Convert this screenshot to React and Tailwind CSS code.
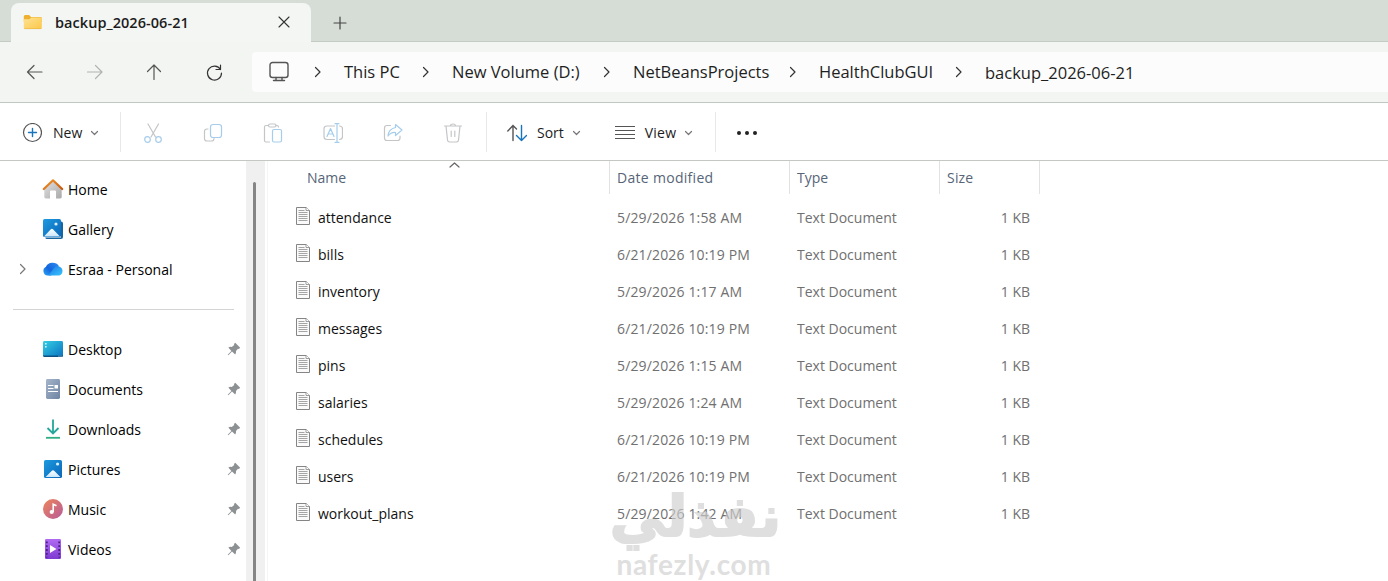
import clsx from 'clsx';

const crumbs = [
    { label: 'This PC', className: 'w-[108px]' },
    { label: 'New Volume (D:)', className: 'w-[181px]' },
    { label: 'NetBeansProjects', className: 'w-[186px]' },
    { label: 'HealthClubGUI', className: 'w-[166px]' },
    { label: 'backup_2026-06-21', className: 'w-[160px] pt-px' },
];

const files = [
    { name: 'attendance', date: '5/29/2026 1:58 AM' },
    { name: 'bills', date: '6/21/2026 10:19 PM' },
    { name: 'inventory', date: '5/29/2026 1:17 AM' },
    { name: 'messages', date: '6/21/2026 10:19 PM' },
    { name: 'pins', date: '5/29/2026 1:15 AM' },
    { name: 'salaries', date: '5/29/2026 1:24 AM' },
    { name: 'schedules', date: '6/21/2026 10:19 PM' },
    { name: 'users', date: '6/21/2026 10:19 PM' },
    { name: 'workout_plans', date: '5/29/2026 1:42 AM' },
];

// Base para los iconos de línea
const Icon = ({ size = 20, color = '#555', width = 1.2, className, children }) => (
    <svg
        width={size}
        height={size}
        viewBox={`0 0 ${size} ${size}`}
        fill="none"
        stroke={color}
        strokeWidth={width}
        strokeLinecap="round"
        strokeLinejoin="round"
        className={clsx('shrink-0', className)}
    >
        {children}
    </svg>
);

const FolderIcon = () => (
    <svg width="20" height="16" viewBox="0 0 20 16" className="shrink-0">
        <defs>
            <linearGradient id="folder" x1="0" y1="0" x2="1" y2="1">
                <stop offset="0" stopColor="#ffe394" />
                <stop offset="1" stopColor="#fbc748" />
            </linearGradient>
        </defs>
        <path d="M.8 2.5Q.8 1 2.3 1H6l2 2h9.5q1.3 0 1.3 1.3V8H.8z" fill="#eeb02e" />
        <path d="M.8 5.2H6.3L8.3 3.6h9.2q1.3 0 1.3 1.3v8.6q0 1.5-1.5 1.5h-15Q.8 15 .8 13.5z" fill="url(#folder)" />
        <path d="M1.3 14.6h17" stroke="#eeb84a" strokeWidth=".8" />
    </svg>
);

const Chevron = ({ className, color = '#333', d = 'M3.5 1.5 8 6l-4.5 4.5' }) => (
    <Icon size={12} color={color} className={className}>
        <path d={d} />
    </Icon>
);

const DownChevron = () => <Chevron color="#777" className="ml-1.5" d="M3.5 4.5 6.5 7.5 9.5 4.5" />;

const HomeIcon = () => (
    <svg width="22" height="22" viewBox="0 0 22 22">
        <defs>
            <linearGradient id="wall" x1="0" y1="0" x2="1" y2="1">
                <stop offset="0" stopColor="#e2e2e2" />
                <stop offset="1" stopColor="#a9a9a9" />
            </linearGradient>
            <linearGradient id="roof" x1="0" y1="0" x2="1" y2="1">
                <stop offset="0" stopColor="#f39a2d" />
                <stop offset="1" stopColor="#c8560b" />
            </linearGradient>
        </defs>
        <path d="M2.3 10.5 11 2.5l8.7 8v8.6q0 1.4-1.4 1.4H14v-7q0-1-1-1H9q-1 0-1 1v7H3.7q-1.4 0-1.4-1.4z" fill="url(#wall)" />
        <path d="M1.8 11 11 2.3l9.2 8.7" fill="none" stroke="url(#roof)" strokeWidth="2.2" strokeLinecap="round" strokeLinejoin="round" />
    </svg>
);

const PhotoIcon = ({ stacked }) => (
    <svg width="22" height="22" viewBox="0 0 22 22">
        <defs>
            <linearGradient id="photo" x1="0" y1="0" x2="1" y2="1">
                <stop offset="0" stopColor="#1c9be0" />
                <stop offset="1" stopColor="#0b65b8" />
            </linearGradient>
            <linearGradient id="mount" x1="0" y1="0" x2="0" y2="1">
                <stop offset="0" stopColor="#fff" />
                <stop offset="1" stopColor="#c9e6fb" />
            </linearGradient>
        </defs>
        {stacked && <path d="M19 3.5q2 0 2 2V19q0 2-2 2H5q-1.5 0-1.8-1.5H19z" fill="#17649f" />}
        <rect x={stacked ? 1 : 2} y={stacked ? 1 : 2} width="18" height="18" rx="1.6" fill="url(#photo)" />
        <path d={stacked ? 'm2 18.6 6.600-7.200q1.300-1.400 2.600 0l6.800 7.200z' : 'm3.600 19 6-6q1.400-1.400 2.800 0l6 6z'} fill="url(#mount)" />
        <circle cx={stacked ? 14 : 15.6} cy="6" r="1.6" fill="#d9effc" />
    </svg>
);

const CloudIcon = () => (
    <svg width="22" height="22" viewBox="0 0 22 22">
        <defs>
            <linearGradient id="cloud" x1="0" y1="1" x2="1" y2="0">
                <stop offset="0" stopColor="#29a7f5" />
                <stop offset=".45" stopColor="#1465dd" />
                <stop offset="1" stopColor="#2b8cf0" />
            </linearGradient>
            <linearGradient id="cloudFront" x1="0" y1="0" x2="1" y2="1">
                <stop offset="0" stopColor="#1b76e8" />
                <stop offset="1" stopColor="#38c6fb" />
            </linearGradient>
        </defs>
        <path d="M5.500 17.500A4.600 4.600 0 0 1 4 8.800 7 6 0 0 1 16.800 8L9 17.500z" fill="url(#cloud)" />
        <path d="M6.500 17.300 12 10q3-3.500 6-1.100A4.600 4.600 0 0 1 16.800 17.500H6.500z" fill="url(#cloudFront)" />
    </svg>
);

const DesktopIcon = () => (
    <svg width="22" height="22" viewBox="0 0 22 22">
        <defs>
            <linearGradient id="desk" x1="0" y1="0" x2="1" y2="1">
                <stop offset="0" stopColor="#35cfe4" />
                <stop offset="1" stopColor="#0a72c0" />
            </linearGradient>
        </defs>
        <rect x="1" y="3" width="20" height="16" rx="1.4" fill="url(#desk)" />
        <path d="M1 17.6h20q0 1.4-1.4 1.4H2.4Q1 19 1 17.6z" fill="#0d5182" />
        <path d="M3 5h1.6v1.6H3zM3 8h1.6v1.6H3zM16.5 17.7h1v.8h-1zM18.5 17.7h1v.8h-1z" fill="#d9f8ff" />
    </svg>
);

const DocumentsIcon = () => (
    <svg width="22" height="22" viewBox="0 0 22 22">
        <defs>
            <linearGradient id="docs" x1="0" y1="0" x2="1" y2="1">
                <stop offset="0" stopColor="#a5b5ca" />
                <stop offset="1" stopColor="#6e84a4" />
            </linearGradient>
        </defs>
        <rect x="4" y="1" width="14" height="20" rx="1.4" fill="url(#docs)" />
        <path d="M6 7.5h5.500M6 10.500h5.500M6 13.500h10" stroke="#fff" strokeWidth="1.2" />
        <rect x="12.5" y="7" width="3.5" height="3.5" fill="#fff" />
    </svg>
);

const DownloadsIcon = () => (
    <svg width="22" height="22" viewBox="0 0 22 22" fill="none" strokeWidth="1.8">
        <path d="M11 1.5V15M5.5 10l5.500 5.500L16.500 10" stroke="#23a79a" />
        <path d="M4 19.800h14" stroke="#2fae84" />
    </svg>
);

const MusicIcon = () => (
    <svg width="22" height="22" viewBox="0 0 22 22">
        <defs>
            <linearGradient id="music" x1="0" y1="0" x2="1" y2="1">
                <stop offset="0" stopColor="#ee8559" />
                <stop offset="1" stopColor="#b75b9b" />
            </linearGradient>
        </defs>
        <circle cx="11" cy="11" r="10" fill="url(#music)" />
        <circle cx="9.7" cy="14" r="2.1" fill="#fff" />
        <path d="M11.2 14V6.2l3.3 1.6" stroke="#fff" strokeWidth="1.6" fill="none" />
    </svg>
);

const VideosIcon = () => (
    <svg width="22" height="22" viewBox="0 0 22 22">
        <defs>
            <linearGradient id="video" x1="0" y1="0" x2="0" y2="1">
                <stop offset="0" stopColor="#b06af2" />
                <stop offset="1" stopColor="#7e3bd0" />
            </linearGradient>
        </defs>
        <rect x="3" y="1" width="16" height="20" rx="1.2" fill="url(#video)" />
        <path d="M4.8 3.5v16M17.2 3.5v16" stroke="#4b1d8b" strokeWidth="1.8" strokeDasharray="1.8 2" />
        <path d="m8 7 6.5 4L8 15z" fill="#fff" />
    </svg>
);

const PinIcon = () => (
    <svg width="14" height="14" viewBox="0 0 14 14" className="shrink-0">
        <path d="M8.2.8 13.2 5.8 11.8 7 11 6.8 9 9q.4 2-.8 3.4L5 9.4 1.3 13.2.7 12.7 4.4 8.9 1.3 5.6Q2.8 4.5 4.8 4.9L7.2 2.900 7 2z" fill="#8d9193" />
    </svg>
);

const FileIcon = () => (
    <svg width="16" height="20" viewBox="0 0 16 20" className="shrink-0">
        <path d="M1.5 1.5H11l3.5 3v14h-13z" fill="#fafafa" stroke="#858585" />
        <path d="M11 1.5v3h3.5" fill="#fff" stroke="#858585" strokeWidth=".8" />
        <path d="M3.5 4.5h6M3.5 6.5h9M3.5 8.5h9M3.5 10.5h9M3.5 12.5h9M3.5 14.5h9" stroke="#9b9b9b" strokeWidth=".9" />
    </svg>
);

const SideItem = ({ icon, label, arrow, pinned }) => (
    <div className="flex h-10 items-center">
        <div className="w-[42px] pl-[17px]">{arrow && <Chevron color="#777" />}</div>
        {icon}
        <span className="ml-1 flex-1 pt-0.5 text-black">{label}</span>
        {pinned && <div className="mr-[5px]"><PinIcon /></div>}
    </div>
);

const TopBar = () => (
    <>
        <div className="flex h-[42px] items-end border-b border-[#c3cbc4] bg-[#d6ddd6]">
            <div className="-mb-px ml-[11px] flex h-[39px] w-[300px] items-center rounded-t-lg bg-[#f3f6f3] pb-px pl-3">
                <FolderIcon />
                <span className="ml-3 w-[223px] pt-px text-[14.5px] font-semibold tracking-[0.05px] text-[#1c1c1c]">backup_2026-06-21</span>
                <Icon size={12} color="#333" width={1.1}>
                    <path d="M1 1l10 10M11 1 1 11" />
                </Icon>
            </div>
            <Icon size={14} color="#444" className="mb-[11px] ml-[22px]">
                <path d="M7 1v12M1 7h12" />
            </Icon>
        </div>
        <div className="flex h-[61px] items-center border-b border-[#c1c7c1] bg-[#f2f5f2]">
            <div className="flex w-[252px] gap-10 pl-[25px]">
                <Icon>
                    <path d="M17 10H2.5M9 3.5 2.5 10 9 16.5" />
                </Icon>
                <Icon color="#b1b3b1">
                    <path d="M2.5 10H17M10.5 3.5 17 10l-6.5 6.5" />
                </Icon>
                <Icon className="-ml-px">
                    <path d="M10 17.5V3M3.5 9.5 10 3l6.5 6.5" />
                </Icon>
                <Icon color="#333">
                    <path d="M16.5 7.5A7 7 0 1 0 17.500 11M16.500 3v4.500H12" />
                </Icon>
            </div>
            <div className="flex h-10 flex-1 items-center rounded-l bg-[#fbfcfb] pl-4 text-[16.5px] text-[#1f1f1f]">
                <Icon size={22} color="#555" width={1.4}>
                    <rect x="2" y="1.5" width="18" height="15" rx="2.5" />
                    <path d="M8 16.5v3M14 16.5v3M5.5 19.500h11" />
                </Icon>
                <Chevron className="mr-5 ml-[22px]" />
                {crumbs.map((crumb, i) => (
                    <div key={crumb.label} className={clsx('flex items-center justify-between whitespace-nowrap', crumb.className)}>
                        <span>{crumb.label}</span>
                        {i < crumbs.length - 1 && <Chevron className="mr-5" />}
                    </div>
                ))}
            </div>
        </div>
    </>
);

const Toolbar = () => (
    <div className="flex h-[58px] items-center border-b border-[#c4c7c4] bg-white text-[#1c1c1c]">
        <div className="flex h-10 w-[121px] items-center border-r border-[#e8e8e8] pt-0.5 pl-[22px]">
            <Icon color="#555">
                <circle cx="10.5" cy="9.5" r="9" />
                <path d="M10.5 5.5v8M6.5 9.5h8" stroke="#1675bd" strokeWidth="1.4" />
            </Icon>
            <span className="ml-[11px] pt-px">New</span>
            <DownChevron />
        </div>
        <div className="flex h-10 w-[366px] items-center gap-10 border-r border-[#e8e8e8] pt-0.5 pl-[22px]">
            <Icon color="#c3c5c7">
                <path d="M5 1l7.500 13M15.500 1 8 14" />
                <circle cx="4.500" cy="16.500" r="2.800" stroke="#a6cdeb" />
                <circle cx="15.500" cy="16.500" r="2.800" stroke="#a6cdeb" />
            </Icon>
            <Icon color="#c3c5c7">
                <path d="M5 6H4Q1.500 6 1.500 8.500v7Q1.500 18 4 18h4.500Q11 18 11 15.500" />
                <rect x="7.5" y="1.5" width="11" height="13" rx="2.5" stroke="#a6cdeb" />
            </Icon>
            <Icon color="#c3c5c7">
                <path d="M5.500 2.500H3Q1.500 2.500 1.500 4v13.500Q1.500 19 3 19H6.500M13 2.500h1Q15.500 2.500 15.500 4" />
                <rect x="5.5" y="1" width="7.5" height="3" rx="1.5" />
                <rect x="9.5" y="6.5" width="9" height="12.5" rx="1.5" stroke="#a6cdeb" />
            </Icon>
            <Icon color="#c3c5c7">
                <path d="M11.500 3H4Q1 3 1 6v7.500q0 3 3 3h7.500M16.500 3q3 0 3 3v7.500q0 3-3 3" />
                <path d="m4 13.500 3.500-8 3.500 8M5.300 11h4.400M14 .7v18.600M12 .7h4M12 19.300h4" stroke="#a6cdeb" />
            </Icon>
            <Icon color="#c3c5c7">
                <path d="M7.500 2.500H4Q1.500 2.500 1.500 5V15q0 2.500 2.500 2.500h10.500q2.500 0 2.500-2.500v-2" />
                <path d="M12.500 1.500 19 7l-6.500 5.500V9.500Q8 9 5 13q.5-7 7.500-8.500z" stroke="#a6cdeb" />
            </Icon>
            <Icon color="#c3c5c7">
                <path d="M1.500 3h17M3 3 4.500 17q.2 2 2 2h7q1.800 0 2-2L17 3M7.500 3q0-2 2.500-2t2.500 2M8.200 8v5.500M11.800 8v5.500" />
            </Icon>
        </div>
        <div className="flex h-10 w-[229px] items-center border-r border-[#e8e8e8] pt-0.5 pl-5">
            <Icon size={20} width={1.4}>
                <path d="M6 17.500V2.500M.8 8 6 2.500 9.500 6" />
                <path d="M14.500 2.500v15M9.500 12.500l5 5 5-5" stroke="#1675bd" />
            </Icon>
            <span className="ml-[10px] pt-px">Sort</span>
            <DownChevron />
            <Icon className="ml-[33px]">
                <path d="M.5 3.500h19M.5 7.500h19M.5 11.500h19M.5 15.500h19" />
            </Icon>
            <span className="ml-[10px] pt-px tracking-[0.2px]">View</span>
            <DownChevron />
        </div>
        <div className="flex gap-1 pt-0.5 pl-[21px]">
            <span className="size-1 rounded-full bg-[#222]" />
            <span className="size-1 rounded-full bg-[#222]" />
            <span className="size-1 rounded-full bg-[#222]" />
        </div>
    </div>
);

const Sidebar = () => (
    <div className="flex w-[268px] shrink-0 border-r border-[#f5f5f5]">
        <div className="w-[246px] pt-2">
            <SideItem icon={<HomeIcon />} label="Home" />
            <SideItem icon={<PhotoIcon stacked />} label="Gallery" />
            <SideItem icon={<CloudIcon />} label="Esraa - Personal" arrow />
            <div className="mr-3 ml-[13px] flex h-10 items-center">
                <div className="h-px w-full bg-[#d4d4d4]" />
            </div>
            <SideItem icon={<DesktopIcon />} label="Desktop" pinned />
            <SideItem icon={<DocumentsIcon />} label="Documents" pinned />
            <SideItem icon={<DownloadsIcon />} label="Downloads" pinned />
            <SideItem icon={<PhotoIcon />} label="Pictures" pinned />
            <SideItem icon={<MusicIcon />} label="Music" pinned />
            <SideItem icon={<VideosIcon />} label="Videos" pinned />
        </div>
        <div className="w-[19px] bg-[#f0f0f0] pt-[21px] pl-[7px]">
            <div className="h-full w-[3px] rounded-t bg-[#858585]" />
        </div>
    </div>
);

const FileList = () => (
    <div className="relative flex-1">
        <div className="flex h-[33px] text-[#566578]">
            <div className="w-[342px] border-r border-[#e2e2e2] pt-[7px] pl-[39px]">Name</div>
            <div className="w-[180px] border-r border-[#e2e2e2] pt-[7px] pl-[7px] tracking-[0.3px]">Date modified</div>
            <div className="w-[150px] border-r border-[#e2e2e2] pt-[7px] pl-[7px]">Type</div>
            <div className="w-[100px] border-r border-[#e2e2e2] pt-[7px] pl-[7px] tracking-[0.2px]">Size</div>
        </div>
        <Chevron color="#666" className="absolute top-[-2px] left-[180px]" d="M2 8l4.500-4L11 8" />
        <div className="pt-[5px]">
            {files.map((file) => (
                <div key={file.name} className="flex h-[37px] items-center text-[#707070]">
                    <div className="flex w-[349px] items-center pl-[27px]">
                        <div className="-mt-[3px]"><FileIcon /></div>
                        <span className="ml-[7px] text-[#111]">{file.name}</span>
                    </div>
                    <span className="w-[180px] tracking-[0.15px]">{file.date}</span>
                    <span className="w-[150px]">Text Document</span>
                    <span className="w-[83px] text-right">1 KB</span>
                </div>
            ))}
        </div>
        {/* Marca de agua */}
        <div className="absolute top-[322px] left-[342px] w-[168px] text-center font-bold text-[#cecece] opacity-65">
            <div dir="rtl" className="h-[68px] translate-x-[3px] font-['DejaVu_Sans',sans-serif] text-[56px] leading-[68px] whitespace-nowrap [-webkit-text-stroke:2px_#cecece]">نفذلي</div>
            <div className="h-[28px] font-['Lato',sans-serif] text-[28px] leading-[26px] tracking-[0.7px]">nafezly.com</div>
        </div>
    </div>
);

export default function App() {
    return (
        <div className="flex h-[581px] w-[1388px] flex-col overflow-hidden bg-white font-['Open_Sans',sans-serif] text-[14px] leading-5">
            <TopBar />
            <Toolbar />
            <div className="flex min-h-0 flex-1">
                <Sidebar />
                <FileList />
            </div>
        </div>
    );
}
